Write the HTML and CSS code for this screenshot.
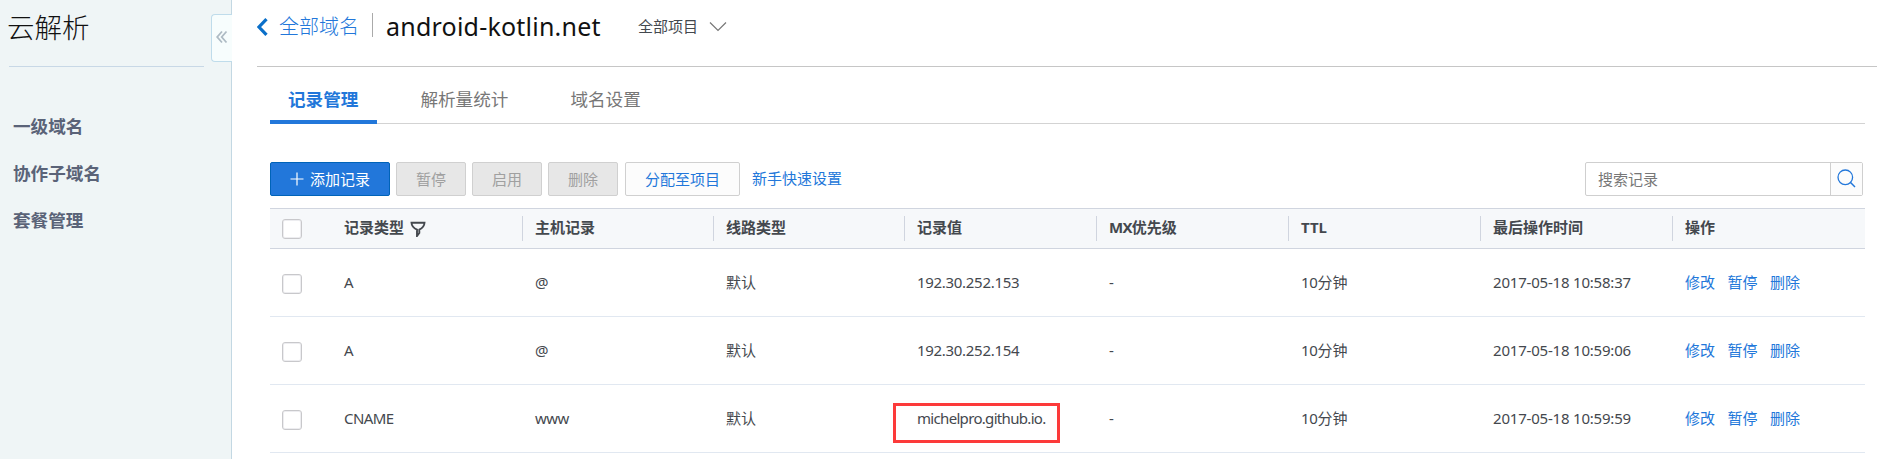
FILE: index.html
```html
<!DOCTYPE html>
<html lang="zh-CN">
<head>
<meta charset="utf-8">
<title>云解析</title>
<link rel="stylesheet" href="styles.css">
</head>
<body>
<div class="layout">
  <aside class="sidebar">
    <h1 class="sidebar-title">云解析</h1>
    <button class="collapse" aria-label="收起">
      <svg width="12" height="14" viewBox="0 0 12 14"><path d="M6 1.5 1.2 7 6 12.5M10.500 1.500 5.700 7 10.500 12.500" fill="none" stroke="#aebbc4" stroke-width="1.800"/></svg>
    </button>
    <nav class="side-nav">
      <a>一级域名</a>
      <a>协作子域名</a>
      <a>套餐管理</a>
    </nav>
  </aside>
  <main class="main">
    <header class="head">
      <svg class="back" width="11" height="18" viewBox="0 0 11 18"><path d="M9.500 1.200 2 9 9.500 16.800" fill="none" stroke="#0a6fc9" stroke-width="3.200"/></svg>
      <a class="all-domains">全部域名</a>
      <span class="divider"></span>
      <span class="domain">android-kotlin.net</span>
      <span class="project">全部项目</span>
      <svg class="chevron" width="18" height="12" viewBox="0 0 18 12"><path d="M1 1.500 9 9.500 17 1.500" fill="none" stroke="#777" stroke-width="1.200"/></svg>
    </header>
    <section class="content">
      <nav class="tabs">
        <a class="tab active">记录管理</a>
        <a class="tab">解析量统计</a>
        <a class="tab">域名设置</a>
      </nav>
      <div class="toolbar">
        <button class="btn primary"><svg width="14" height="14" viewBox="0 0 14 14"><path d="M7 .5v13M.5 7h13" stroke="#fff" stroke-width="1.200"/></svg>添加记录</button>
        <button class="btn disabled">暂停</button>
        <button class="btn disabled">启用</button>
        <button class="btn disabled">删除</button>
        <button class="btn assign">分配至项目</button>
        <a class="quick">新手快速设置</a>
        <div class="search">
          <span class="search-input">搜索记录</span>
          <span class="search-btn"><svg width="19" height="19" viewBox="0 0 19 19"><circle cx="8.300" cy="8.300" r="7.300" fill="none" stroke="#2277da" stroke-width="1.300"/><path d="M13.300 13.300 18 18" stroke="#2277da" stroke-width="1.500"/></svg></span>
        </div>
      </div>
      <div class="table">
        <div class="row thead">
          <div class="check"><i class="box"></i></div>
          <div class="th">记录类型<svg class="filter" width="16" height="16" viewBox="0 0 16 16"><path d="M1.500 1.800H14.500Q14.200 6.500 9.300 8.700V12L7 15V8.700Q1.800 6.500 1.500 1.800Z" fill="none" stroke="#44484e" stroke-width="1.900"/></svg></div>
          <div class="th">主机记录</div>
          <div class="th">线路类型</div>
          <div class="th">记录值</div>
          <div class="th"><span class="mx">MX</span>优先级</div>
          <div class="th">TTL</div>
          <div class="th">最后操作时间</div>
          <div class="th">操作</div>
        </div>
        <div class="row">
          <div class="check"><i class="box"></i></div>
          <div class="td">A</div><div class="td">@</div><div class="td">默认</div>
          <div class="td ip">192.30.252.153</div><div class="td">-</div><div class="td"><span class="num">10</span>分钟</div>
          <div class="td date">2017-05-18 10:58:37</div>
          <div class="td ops"><a>修改</a><a>暂停</a><a>删除</a></div>
        </div>
        <div class="row">
          <div class="check"><i class="box"></i></div>
          <div class="td">A</div><div class="td">@</div><div class="td">默认</div>
          <div class="td ip">192.30.252.154</div><div class="td">-</div><div class="td"><span class="num">10</span>分钟</div>
          <div class="td date">2017-05-18 10:59:06</div>
          <div class="td ops"><a>修改</a><a>暂停</a><a>删除</a></div>
        </div>
        <div class="row">
          <div class="check"><i class="box"></i></div>
          <div class="td name">CNAME</div><div class="td name">www</div><div class="td">默认</div>
          <div class="td marked"><span class="host">michelpro.github.io.</span></div><div class="td">-</div><div class="td"><span class="num">10</span>分钟</div>
          <div class="td date">2017-05-18 10:59:59</div>
          <div class="td ops"><a>修改</a><a>暂停</a><a>删除</a></div>
        </div>
      </div>
    </section>
  </main>
</div>
</body>
</html>
```
FILE: styles.css
```css
*, *::after { box-sizing: border-box; }
body {
  margin: 0;
  background: #fff;
  color: #44484e;
  font: 15px/20px "Noto Sans", "Noto Sans CJK SC", sans-serif;
  overflow: hidden;
}
.layout { display: flex; height: 459px; }
.sidebar {
  position: relative;
  width: 232px;
  flex: none;
  padding: 0 27px 0 9px;
  background: #eff5f6;
  border-right: 1px solid #c3d8e3;
}
.sidebar-title {
  margin: 0 0 0 -2px;
  height: 66px;
  padding-top: 8px;
  font-size: 27.5px;
  line-height: 40px;
  font-weight: 300;
  color: #111;
}
.collapse {
  position: absolute;
  top: 14px;
  right: -1px;
  width: 21px;
  height: 48px;
  padding: 0 0 2px 0;
  display: flex;
  align-items: center;
  justify-content: center;
  background: #f7fdfd;
  border: 1px solid #bfdceb;
  border-right: 0;
  border-radius: 4px 0 0 4px;
}
.side-nav {
  display: flex;
  flex-direction: column;
  gap: 17px;
  border-top: 1px solid #c8d8e6;
  padding: 44px 0 0 4px;
  font-size: 17.6px;
  line-height: 30px;
  font-weight: 700;
  color: #5a6378;
}
.main { flex: 1; padding: 0 7px 0 25px; }
.head {
  display: flex;
  align-items: center;
  height: 67px;
  padding-bottom: 12px;
  border-bottom: 1px solid #c6c6c6;
}
.all-domains { margin-left: 11px; font-size: 20px; font-weight: 300; color: #2277da; }
.divider { width: 1px; height: 24px; margin: -5px 13px 0 13px; background: #aaa; }
.domain { width: 226px; margin-top: -2px; font-size: 25px; letter-spacing: .22px; color: #111; white-space: nowrap; }
.project { margin: -2px 0 0 26px; }
.chevron { margin-left: 11px; }
.content { padding: 0 12px 0 13px; }
.tabs { display: flex; height: 57px; border-bottom: 1px solid #d3d3d3; }
.tab {
  height: 57px;
  padding: 17px 19px 0 18px;
  margin-right: 25px;
  font-size: 17.6px;
  line-height: 30px;
  color: #777;
}
.active { color: #2277da; font-weight: 700; border-bottom: 4px solid #2277da; }
.toolbar { display: flex; height: 84px; padding: 38px 2px 0 0; }
.btn {
  width: 70px;
  height: 34px;
  margin-right: 6px;
  padding: 0;
  display: flex;
  align-items: center;
  justify-content: center;
  border: 1px solid #d0d0d0;
  border-radius: 2px;
  font: inherit;
}
.primary { width: 120px; gap: 6px; background: #2277da; border-color: #0063b8; color: #fff; }
.disabled { background: #e7e7e7; color: #a0a0a0; }
.assign { width: 115px; margin-left: 1px; background: #fcfcfc; color: #2277da; }
.quick { margin: 6px 0 0 6px; color: #2277da; }
.search { display: flex; width: 278px; height: 34px; margin-left: auto; border: 1px solid #cfcfcf; border-radius: 2px; }
.search-input { flex: 1; padding: 6px 12px; color: #777; }
.search-btn { width: 32px; padding: 6px 0 0 6px; border-left: 1px solid #cfcfcf; background: #fcfcfc; }
.search-btn svg { display: block; }
.row {
  display: grid;
  grid-template-columns: 61px 191px 191px 191px repeat(4, 192px) 1fr;
  align-items: center;
  height: 68px;
  border-bottom: 1px solid #e1e8f1;
}
.thead { height: 41px; background: #f6f8fa; border-top: 1px solid #d0d5df; border-bottom-color: #d0d5df; font-weight: 700; }
.check { padding: 2px 0 0 12px; }
.thead .check { padding-top: 1px; }
.box { display: block; width: 20px; height: 20px; border: 1px solid #c8c8cb; border-radius: 3px; background: #fff; box-shadow: inset 0 0 0 1px #ededf0; }
.th { display: flex; align-items: center; height: 25px; padding: 0 0 4px 12px; border-left: 1px solid #d0d5df; }
.check + .th { border-left-color: transparent; }
.filter { margin: 5px 0 0 6px; }
.mx { letter-spacing: -.7px; }
.td { padding: 0 0 2px 13px; white-space: nowrap; }
.ip { letter-spacing: -.3px; }
.num { letter-spacing: -.4px; }
.date { letter-spacing: -.2px; }
.name { letter-spacing: -.6px; }
.host { letter-spacing: -.68px; }
.ops { display: flex; gap: 12.500px; color: #2277da; }
.marked { position: relative; }
.marked::after {
  content: "";
  position: absolute;
  left: -11px;
  top: -5px;
  width: 167px;
  height: 40px;
  border: 3px solid #fc3a3a;
}
```
